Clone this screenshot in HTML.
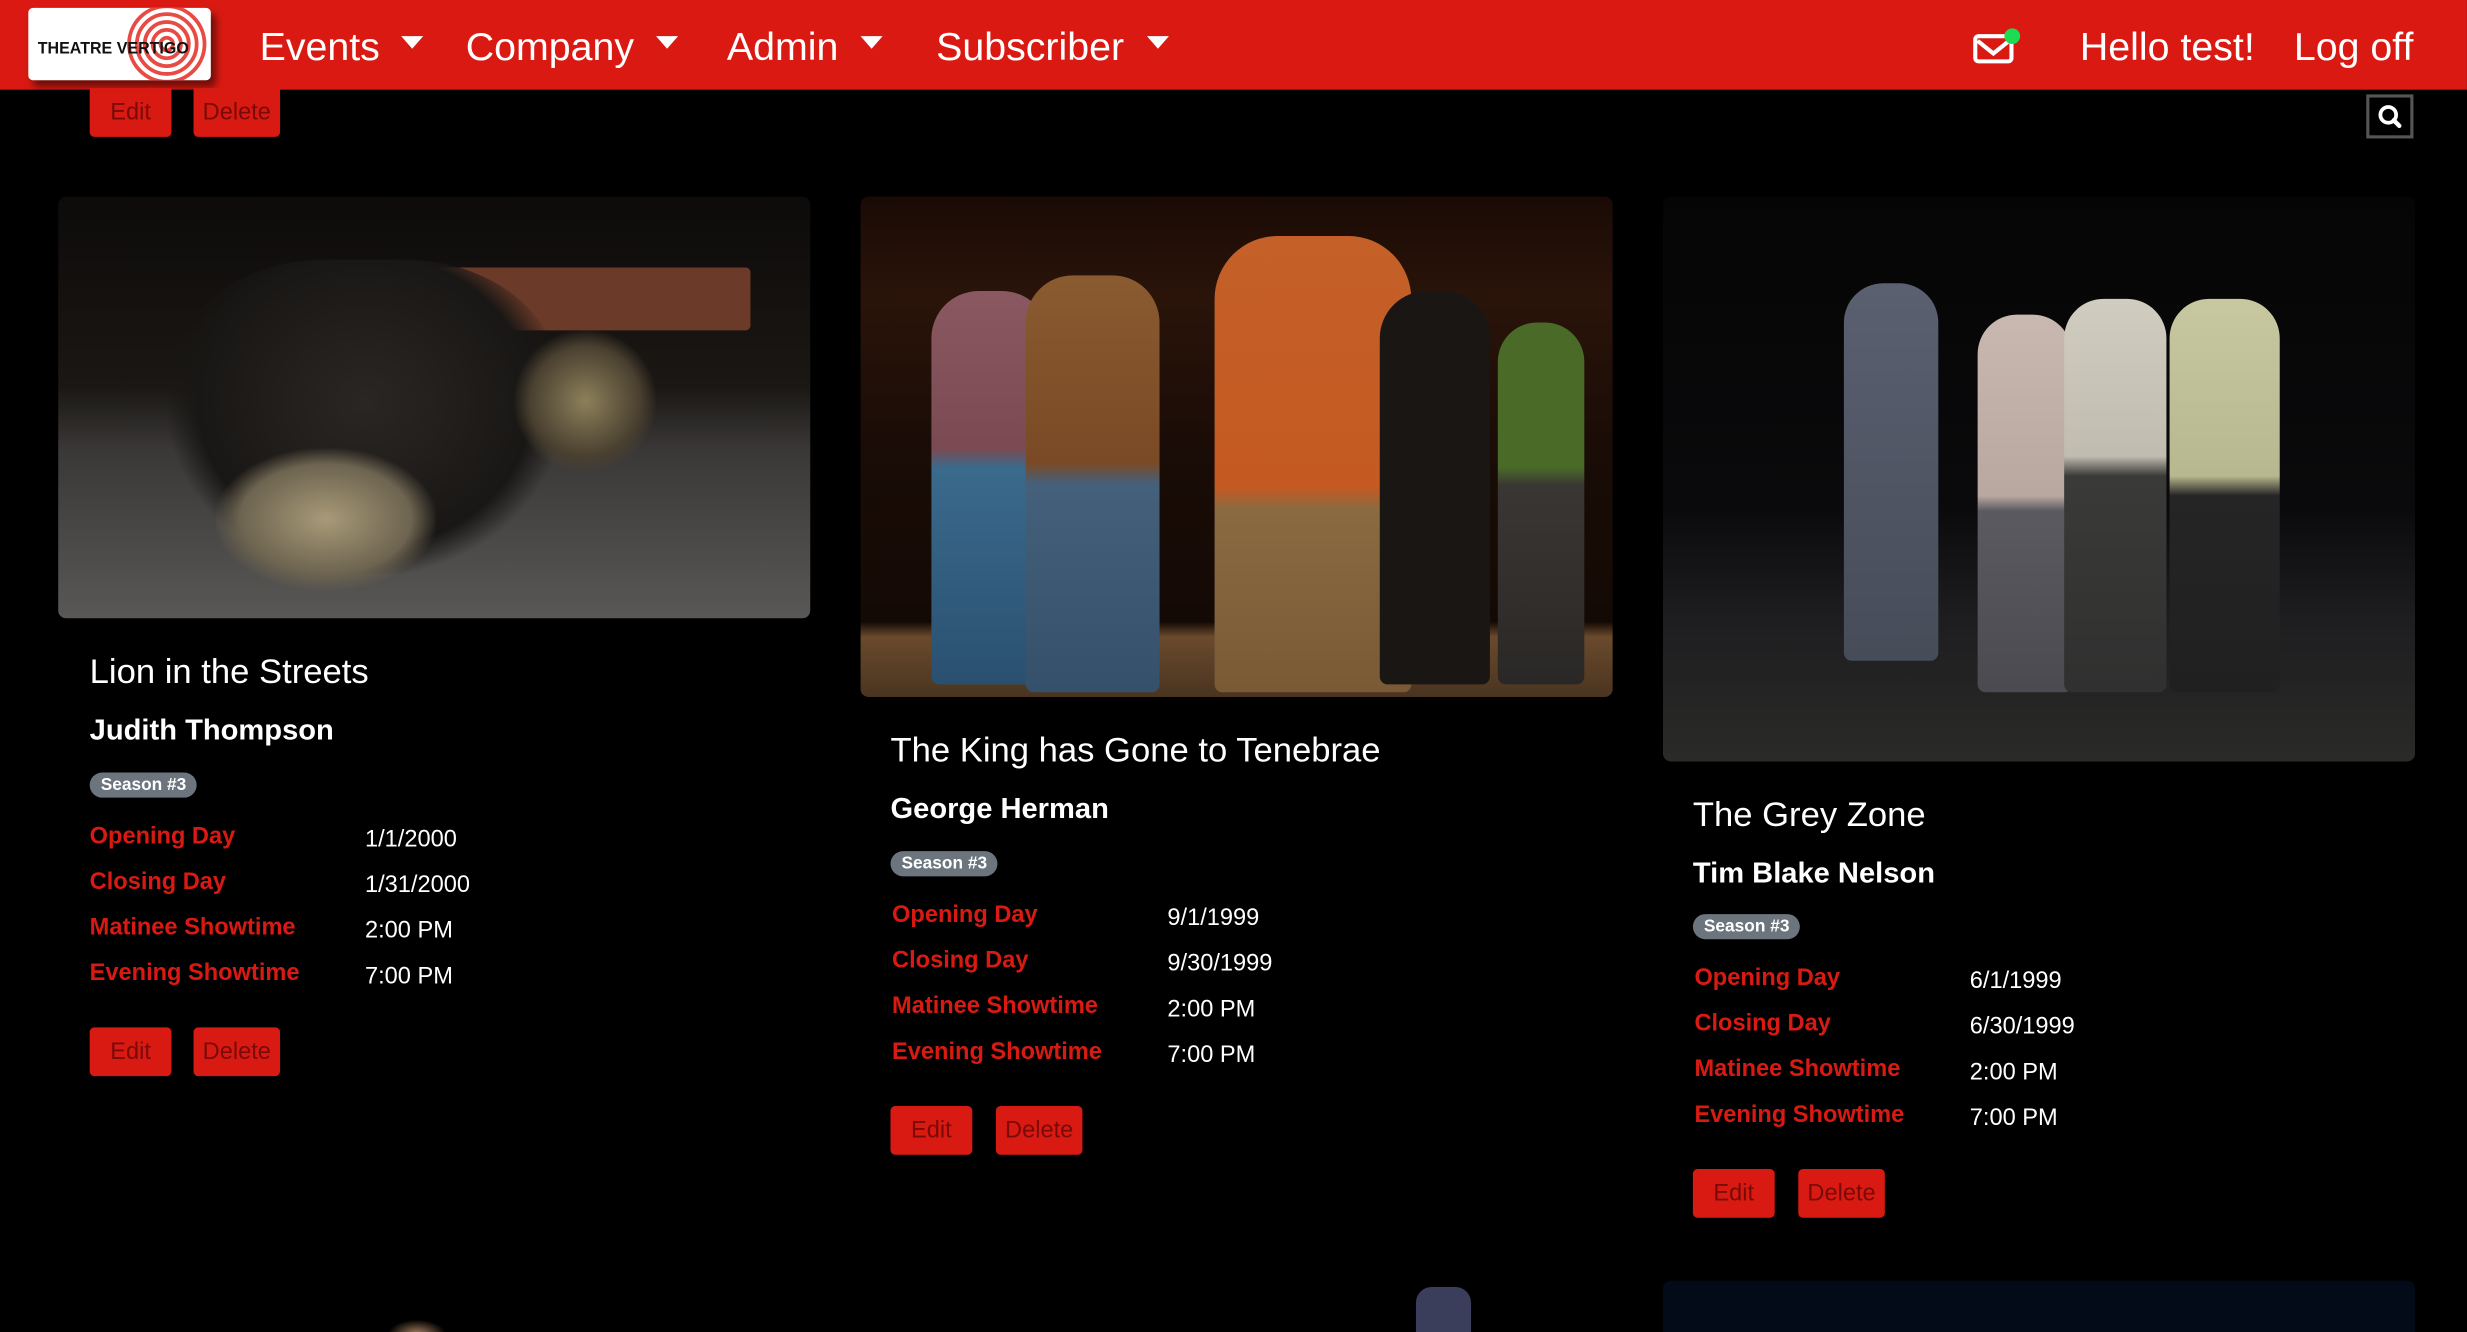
<!DOCTYPE html>
<html><head><meta charset="utf-8"><style>
*{margin:0;padding:0;box-sizing:border-box}
html,body{width:2467px;height:1332px;overflow:hidden;background:#000}
#w{width:1568px;height:847px;transform:scale(1.5733);transform-origin:0 0;position:relative;font-family:"Liberation Sans",sans-serif;color:#fff}
.nav{position:absolute;left:0;top:0;width:1568px;height:57px;background:#da1a12}
.logo{position:absolute;left:18px;top:5px;width:116px;height:46px;background:#fff;border-radius:3px;box-shadow:3px 4px 5px rgba(0,0,0,.5);overflow:hidden}
.logo span{position:absolute;left:6px;top:20px;font-size:10.5px;font-weight:bold;color:#111;white-space:nowrap;transform:scaleX(0.97);transform-origin:0 0}
.ni{position:absolute;top:16px;font-size:25px;color:#fff}
.ni i{display:inline-block;width:0;height:0;border-left:7px solid transparent;border-right:7px solid transparent;border-top:8px solid #fff;margin-left:14px;vertical-align:middle;position:relative;top:-4px}
.btn{position:absolute;height:31px;background:#d91a12;border-radius:3px;color:#7a0a08;font-size:15px;text-align:center;line-height:31px}
.img{position:absolute;border-radius:5px;overflow:hidden}
.t{position:absolute;font-size:22px}
.a{position:absolute;font-size:18.5px;font-weight:bold}
.b{position:absolute;background:#6c757d;border-radius:8px;font-size:11px;font-weight:bold;padding:0 7px;height:16px;line-height:16px}
.l{position:absolute;font-size:15px;font-weight:bold;color:#d91a12}
.v{position:absolute;font-size:15px}
.p{position:absolute;border-radius:40%}
</style></head><body><div id="w">
<div class="nav">
<div class="logo">
<svg style="position:absolute;left:60px;top:-2px" width="56" height="50" viewBox="0 0 56 50"><g fill="none" stroke="#e84a44" stroke-width="2.4"><circle cx="28" cy="25" r="4"/><circle cx="28" cy="25" r="9"/><circle cx="28" cy="25" r="14"/><circle cx="28" cy="25" r="19"/><circle cx="28" cy="25" r="24"/></g></svg>
<span>THEATRE VERTIGO</span></div>
<div class="ni" style="left:165px">Events<i></i></div>
<div class="ni" style="left:296px">Company<i></i></div>
<div class="ni" style="left:462px">Admin<i></i></div>
<div class="ni" style="left:595px">Subscriber<i></i></div>
<svg style="position:absolute;left:1254px;top:18px" width="34" height="26" viewBox="0 0 34 26"><rect x="1.5" y="5" width="23" height="16" rx="2" fill="none" stroke="#fff" stroke-width="2.6"/><path d="M3 8 L13 16 L23 8" fill="none" stroke="#fff" stroke-width="2.6"/><circle cx="25" cy="5" r="5" fill="#1edc52"/></svg>
<div class="ni" style="left:1322px">Hello test!</div>
<div class="ni" style="left:1458px">Log off</div>
</div>
<div class="btn" style="left:57px;top:56px;width:52px;height:31px;border-radius:0 0 3px 3px">Edit</div>
<div class="btn" style="left:123px;top:56px;width:55px;height:31px;border-radius:0 0 3px 3px">Delete</div>
<div style="position:absolute;left:1504px;top:60px;width:30px;height:28px;border:2px solid #555;background:#000"><svg width="26" height="24" viewBox="0 0 26 24"><circle cx="12" cy="11" r="5" fill="none" stroke="#fff" stroke-width="2.4"/><path d="M15.5 14.5 L19 18" stroke="#fff" stroke-width="2.8" stroke-linecap="round"/></svg></div>

<div class="img" style="left:37px;top:125px;width:478px;height:268px;background:linear-gradient(180deg,#0d0b0a 0%,#1a1714 45%,#3a3837 60%,#5a5856 100%)">
<div class="p" style="left:230px;top:45px;width:210px;height:40px;background:#6b3a28;border-radius:3px"></div>
<div class="p" style="left:70px;top:40px;width:250px;height:200px;background:radial-gradient(ellipse at 50% 45%,#2a2624,#191715 60%,transparent 72%)"></div>
<div class="p" style="left:100px;top:160px;width:140px;height:90px;background:radial-gradient(ellipse,#a89a78,#6d6450 55%,transparent 72%)"></div>
<div class="p" style="left:290px;top:85px;width:90px;height:90px;background:radial-gradient(ellipse,#8c805a,#4a4030 55%,transparent 72%)"></div>
</div>
<div class="t" style="left:57px;top:414px">Lion in the Streets</div>
<div class="a" style="left:57px;top:453px">Judith Thompson</div>
<div class="b" style="left:57px;top:491px">Season #3</div>
<div class="l" style="left:57px;top:523px">Opening Day</div><div class="v" style="left:232px;top:525px">1/1/2000</div>
<div class="l" style="left:57px;top:552px">Closing Day</div><div class="v" style="left:232px;top:554px">1/31/2000</div>
<div class="l" style="left:57px;top:581px">Matinee Showtime</div><div class="v" style="left:232px;top:583px">2:00 PM</div>
<div class="l" style="left:57px;top:610px">Evening Showtime</div><div class="v" style="left:232px;top:612px">7:00 PM</div>
<div class="btn" style="left:57px;top:653px;width:52px">Edit</div>
<div class="btn" style="left:123px;top:653px;width:55px">Delete</div>

<div class="img" style="left:547px;top:125px;width:478px;height:318px;background:linear-gradient(180deg,#1a0a05 0%,#2a140a 20%,#1a0c06 50%,#140a05 85%,#6a4a2c 88%,#4a3420 100%)">
<div class="p" style="left:45px;top:60px;width:75px;height:250px;background:linear-gradient(#8a5860 0%,#7a4a52 40%,#3a6a8c 45%,#2a5070 100%);border-radius:30px 30px 5px 5px"></div>
<div class="p" style="left:105px;top:50px;width:85px;height:265px;background:linear-gradient(#8a5a30 0%,#7a4a26 45%,#44607a 50%,#34506a 100%);border-radius:30px 30px 5px 5px"></div>
<div class="p" style="left:225px;top:25px;width:125px;height:290px;background:linear-gradient(#c46028 0%,#c45a22 55%,#8a6a40 60%,#7a5a36 100%);border-radius:40px 40px 5px 5px"></div>
<div class="p" style="left:330px;top:60px;width:70px;height:250px;background:#1a1614;border-radius:30px 30px 5px 5px"></div>
<div class="p" style="left:405px;top:80px;width:55px;height:230px;background:linear-gradient(#4a6a28 0%,#4a6a28 40%,#3a3634 45%,#2a2826 100%);border-radius:25px 25px 5px 5px"></div>
</div>
<div class="t" style="left:566px;top:464px">The King has Gone to Tenebrae</div>
<div class="a" style="left:566px;top:503px">George Herman</div>
<div class="b" style="left:566px;top:541px">Season #3</div>
<div class="l" style="left:567px;top:573px">Opening Day</div><div class="v" style="left:742px;top:575px">9/1/1999</div>
<div class="l" style="left:567px;top:602px">Closing Day</div><div class="v" style="left:742px;top:604px">9/30/1999</div>
<div class="l" style="left:567px;top:631px">Matinee Showtime</div><div class="v" style="left:742px;top:633px">2:00 PM</div>
<div class="l" style="left:567px;top:660px">Evening Showtime</div><div class="v" style="left:742px;top:662px">7:00 PM</div>
<div class="btn" style="left:566px;top:703px;width:52px">Edit</div>
<div class="btn" style="left:633px;top:703px;width:55px">Delete</div>

<div class="img" style="left:1057px;top:125px;width:478px;height:359px;background:linear-gradient(180deg,#050505 0%,#0a0a0c 55%,#1e1e20 75%,#2a2a28 100%)">
<div class="p" style="left:115px;top:55px;width:60px;height:240px;background:linear-gradient(#5a6070,#464c58);border-radius:25px 25px 5px 5px"></div>
<div class="p" style="left:200px;top:75px;width:60px;height:240px;background:linear-gradient(#c8b8b0 0%,#b8a8a0 48%,#5a5a60 52%,#4a4a50 100%);border-radius:25px 25px 5px 5px"></div>
<div class="p" style="left:255px;top:65px;width:65px;height:250px;background:linear-gradient(#d0ccc0 0%,#c0bcb0 40%,#3a3a38 45%,#303030 100%);border-radius:25px 25px 5px 5px"></div>
<div class="p" style="left:322px;top:65px;width:70px;height:250px;background:linear-gradient(#c8c8a0 0%,#b8b890 45%,#252525 50%,#202020 100%);border-radius:25px 25px 5px 5px"></div>
</div>
<div class="t" style="left:1076px;top:505px">The Grey Zone</div>
<div class="a" style="left:1076px;top:544px">Tim Blake Nelson</div>
<div class="b" style="left:1076px;top:581px">Season #3</div>
<div class="l" style="left:1077px;top:613px">Opening Day</div><div class="v" style="left:1252px;top:615px">6/1/1999</div>
<div class="l" style="left:1077px;top:642px">Closing Day</div><div class="v" style="left:1252px;top:644px">6/30/1999</div>
<div class="l" style="left:1077px;top:671px">Matinee Showtime</div><div class="v" style="left:1252px;top:673px">2:00 PM</div>
<div class="l" style="left:1077px;top:700px">Evening Showtime</div><div class="v" style="left:1252px;top:702px">7:00 PM</div>
<div class="btn" style="left:1076px;top:743px;width:52px">Edit</div>
<div class="btn" style="left:1143px;top:743px;width:55px">Delete</div>

<div class="img" style="left:1057px;top:814px;width:478px;height:60px;background:#030a18"></div>
<div class="p" style="left:245px;top:838px;width:40px;height:20px;background:radial-gradient(#a88060,transparent 65%)"></div>
<div class="p" style="left:900px;top:818px;width:35px;height:40px;background:#3a3e5a;border-radius:10px"></div>
</div></body></html>
